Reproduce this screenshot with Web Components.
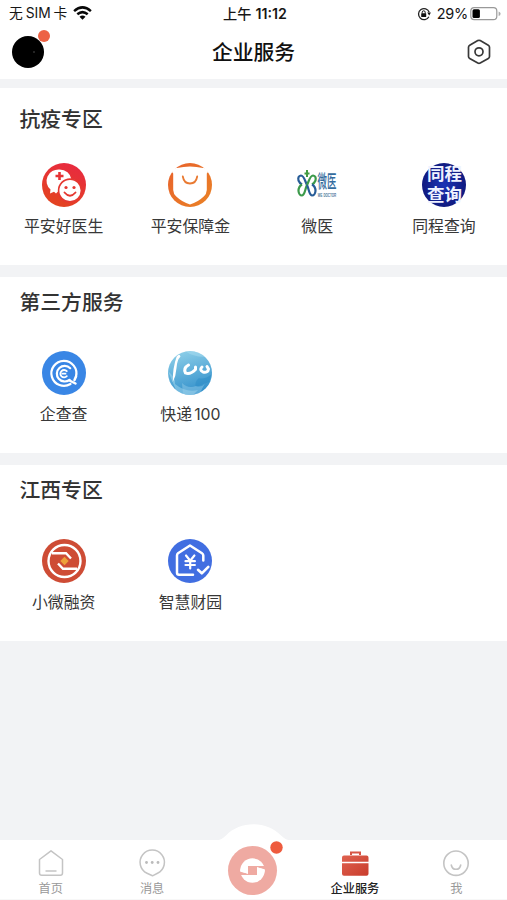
<!DOCTYPE html>
<html lang="zh-CN">
<head>
<meta charset="utf-8">
<title>企业服务</title>
<style>
html,body{margin:0;padding:0}
body{font-family:"Liberation Sans","Noto Sans CJK SC",sans-serif;color:#333;background:#f2f3f5}
</style>
</head>
<body>
<enterprise-page></enterprise-page>
<script>
const define = (name, html) => customElements.define(name, class extends HTMLElement {
  constructor() {
    super();
    this.attachShadow({ mode: 'open' }).innerHTML = html;
  }
});

define('status-bar', `
<style>
:host{display:grid;grid-template-columns:1fr auto 1fr;align-items:center;height:27px;box-sizing:border-box;padding:0 6px 0 9px;color:#161616;font-family:Inter,"Noto Sans CJK SC",sans-serif;font-size:14px;line-height:27px;white-space:nowrap}
div{display:flex;align-items:center}
svg{display:block;flex:none}
.l{gap:5.5px;font-size:13.8px;word-spacing:-1px}
.l svg{margin-top:-1px}
.t{font-weight:600;font-size:14.2px;gap:4px}
.t span:first-child{font-weight:500}
.r{justify-content:flex-end}
.r span{margin:0 2px 0 6px;font-size:14.5px;letter-spacing:-.25px}
</style>
<div class="l"><span>无 SIM 卡</span>
<svg width="19" height="14" viewBox="0 0 19 14" fill="none" stroke="#080808" stroke-width="2.5"><path d="M1.1 5.1Q9.5-2.3 17.9 5.1M4.3 8.3Q9.5 3.9 14.7 8.3"/><path d="M9.5 13.7 6.5 10.7Q9.5 8.2 12.5 10.7Z" fill="#080808" stroke="none"/></svg></div>
<div class="t"><span>上午</span><span>11:12</span></div>
<div class="r">
<svg width="14" height="14" viewBox="0 0 14 14"><path d="M11.9 9.7A5.5 5.5 0 1 1 12.2 5.2" fill="none" stroke="#222" stroke-width="1.3"/><path d="M10.2 5.6h3.7L12.2 8.4z" fill="#111"/><rect x="4.2" y="6.2" width="5" height="3.9" rx=".6" fill="#111"/><path d="M5.2 6.5V5.3a1.5 1.5 0 0 1 3 0v1.2" fill="none" stroke="#111"/></svg>
<span>29%</span>
<svg width="31" height="14" viewBox="0 0 31 14"><rect x=".8" y=".6" width="26" height="12" rx="3.4" fill="#fff" stroke="#999" stroke-width="1.2"/><rect x="2.5" y="2.3" width="7.4" height="8.6" rx="1.5"/><path d="M28.6 4.4q2 .6 2 2.3t-2 2.3z" fill="#aaa"/></svg>
</div>`);

define('page-header', `
<style>
:host{display:grid;grid-template-columns:1fr auto 1fr;align-items:center;height:52px;box-sizing:border-box;padding:0 15px 2px 12px}
h1{margin:0;padding:2px 0 0 3px;font-size:20.8px;font-weight:500;line-height:30px;color:#111}
.avatar{position:relative;width:32px;height:32px;border-radius:50%;background:radial-gradient(circle at 22px 16px,#444 0,#000 1.5px)}
.avatar i{position:absolute;left:25.5px;top:-6.5px;width:12.5px;height:12.5px;border-radius:50%;background:#ed6245}
svg{justify-self:end;display:block}
</style>
<div class="avatar"><i></i></div>
<h1><slot></slot></h1>
<svg width="26" height="26" viewBox="0 0 26 26" fill="none" stroke="#393939" stroke-width="1.7" stroke-linejoin="round"><path d="M11.8 1.6Q13 1 14.2 1.6L22.3 6.2Q23.5 6.9 23.5 8.2V17.4Q23.5 18.7 22.3 19.4L14.2 24Q13 24.7 11.8 24L3.7 19.4Q2.5 18.7 2.5 17.4V8.2Q2.5 6.9 3.7 6.2Z"/><circle cx="13" cy="12.8" r="4"/></svg>`);

define('service-section', `
<style>
:host{display:block;box-sizing:border-box;height:176px;background:#fff;padding-top:11px}
h2{margin:0;padding-left:19.5px;font-size:20.8px;font-weight:500;line-height:30px;color:#333}
.grid{display:grid;grid-template-columns:repeat(4,1fr);margin-top:33.3px}
:host([first]){height:177px;padding-top:17px}
:host([first]) .grid{margin-top:28px}
</style>
<h2><slot name="title"></slot></h2>
<div class="grid"><slot></slot></div>`);

define('service-item', `
<style>
:host{display:flex;flex-direction:column;align-items:center;font-size:15.9px;line-height:24px;color:#383838;white-space:nowrap;padding-left:.6px}
::slotted(svg){display:block;width:44px;height:44px;margin-bottom:7.5px;overflow:visible}
</style>
<slot name="icon"></slot><span><slot></slot></span>`);

define('tab-item', `
<style>
:host{display:flex;flex-direction:column;align-items:center;font-size:12.2px;line-height:18px;color:#999;padding-top:8px}
:host([active]){color:#222;font-weight:500}
::slotted(svg){display:block;width:30px;height:30px;margin-bottom:1.5px}
</style>
<slot name="icon"></slot><span><slot></slot></span>`);

define('center-tab', `
<style>
:host{display:block;position:relative}
svg{position:absolute;left:50%;top:-16px;margin-left:-38px;display:block}
</style>
<svg width="76" height="76" viewBox="0 0 76 76"><path d="M3 16Q6 16 11 11.5C25-3.5 52-3.5 66 11.5Q71 16 74 16V60H3Z" fill="#fff"/>
<circle cx="37.5" cy="46.5" r="24.5" fill="#efaaa2"/>
<circle cx="37.5" cy="46.5" r="12.2" fill="#fff"/>
<path fill="#efaaa2" d="M33 42h9v9h-9zM24.500 47.500 33 49.800V51H24.500ZM50.500 45.500 42 43.200V42H50.500Z"/>
<path fill="#fff" d="M25.500 44.500 33 46.500V49.800L25.200 47.200ZM49.500 48.500 42 46.500V43.200L49.800 45.800Z"/>
<circle cx="61.500" cy="23.500" r="6.200" fill="#ee5b3e"/></svg>`);

define('tab-bar', `
<style>
:host{display:grid;grid-template-columns:repeat(5,1fr);height:60px;background:#fff;box-sizing:border-box;border-bottom:1px solid #f7f7f7}
</style><slot></slot>`);

define('enterprise-page', `
<style>
:host{display:flex;flex-direction:column;height:900px;background:#f2f3f5;overflow:hidden}
.top{background:#fff;height:79px;margin-bottom:9px}
main{display:flex;flex-direction:column;gap:12px;flex:1}
</style>
<div class="top"><status-bar></status-bar><page-header>企业服务</page-header></div>
<main>
<service-section first><span slot="title">抗疫专区</span>
 <service-item><svg slot="icon" viewBox="0 0 44 44"><defs><linearGradient id="a" x1=".7" y1="0" x2=".3" y2="1"><stop stop-color="#e82a40"/><stop offset="1" stop-color="#e3441f"/></linearGradient></defs><circle cx="22" cy="22" r="22" fill="url(#a)"/><path d="M17.500 6.500A12 11.500 0 0 0 8.500 26.500L8 30.500 12 28.800 14 30.500 16 28.500A12 11.500 0 0 0 29.500 16.500 12 11.500 0 0 0 17.500 6.500Z" fill="#fff"/><path d="M17.500 9v8M13.500 13h8" stroke="#e63335" stroke-width="2.600"/><circle cx="28" cy="27.500" r="11.400" fill="#fff" stroke="#e53831" stroke-width="1.600"/><circle cx="24" cy="24.500" r="1.600" fill="#e53831"/><circle cx="32" cy="24.500" r="1.600" fill="#e53831"/><path d="M22.500 29.500Q28 36 33.500 29.500" stroke="#e53831" stroke-width="1.900" fill="none" stroke-linecap="round"/></svg>平安好医生</service-item>
 <service-item><svg slot="icon" viewBox="0 0 44 44"><defs><linearGradient id="b" x1="0" y1="0" x2="1" y2="1"><stop stop-color="#e8612c"/><stop offset="1" stop-color="#ea8225"/></linearGradient></defs><circle cx="22" cy="22" r="22" fill="url(#b)"/><path d="M4 9Q6 4.500 9 5Q22 2 35 5Q38 4.500 40 9L38.800 10.500V27Q38.500 31 36 33.200Q30 39 22 41.500Q14 39 8 33.200Q5.500 31 5.200 27V10.500Z" fill="#fff"/><path d="M14.800 13.500Q16 20.500 22 20.500T29.200 13.500" fill="none" stroke="#e97a32" stroke-width="1.800" stroke-linecap="round"/></svg>平安保障金</service-item>
 <service-item><svg slot="icon" viewBox="0 0 44 44"><g fill="none" stroke-width="2.200"><path d="M12 22C10 18 9 12.500 6 12.500Q2.500 13 3.500 17.500Q4.500 20 7 21.500" stroke="#285d98"/><path d="M12 22C14 18 15 12.500 18 12.500Q21.500 13 20.500 17.500Q19.500 20 17 21.500" stroke="#3c9a4b"/><path d="M7 21.500Q3.500 23.500 3.500 28Q4 32.500 7 32.500C10 32 10 26 12 22" stroke="#3c9a4b"/><path d="M17 21.500Q20.500 23.500 20.500 28Q20 32.500 17 32.500C14 32 14 26 12 22" stroke="#285d98"/></g><path d="M12 7v7M9.500 10.500h5" stroke="#439c44" stroke-width="2"/><text transform="translate(22.500 25.300) scale(.54 1.05)" font-family="Liberation Sans,Noto Sans CJK SC" font-weight="500" font-size="17.500" fill="#346c9e">微医</text><text transform="translate(22.800 33.800) scale(.56 1)" font-family="Liberation Sans" font-weight="700" font-size="5.300" fill="#4f789b">WE DOCTOR</text></svg>微医</service-item>
 <service-item><svg slot="icon" viewBox="0 0 44 44"><defs><radialGradient id="d"><stop stop-color="#1b34b5"/><stop offset="1" stop-color="#101a80"/></radialGradient></defs><circle cx="22" cy="22" r="22" fill="url(#d)"/><g font-family="Liberation Sans,Noto Sans CJK SC" font-weight="700" font-size="17.500" fill="#eef2ff"><text x="5" y="16.800">同程</text><text x="5" y="38">查询</text></g></svg>同程查询</service-item>
</service-section>
<service-section><span slot="title">第三方服务</span>
 <service-item><svg slot="icon" viewBox="0 0 44 44"><circle cx="22" cy="22" r="22" fill="#3986e5"/><g fill="none" stroke="#fff" stroke-width="2.200" stroke-linecap="round"><path d="M28.500 33A12.500 12.500 0 1 1 34 25.500" /><path d="M28.200 17.200A7.800 7.800 0 1 0 27.500 28.800"/><path d="M24.800 20.200A3.700 3.700 0 1 0 24.800 25.200M20.500 22.700h3" stroke-width="1.800"/><path d="M27.500 29.500 33.500 32.500M34 25.500 32.500 29" stroke-width="2.500"/></g></svg>企查查</service-item>
 <service-item><svg slot="icon" viewBox="0 0 44 44"><defs><clipPath id="e"><circle cx="22" cy="22" r="22"/></clipPath><linearGradient id="f" x1=".2" y1="0" x2=".5" y2="1"><stop stop-color="#8fd0e9"/><stop offset="1" stop-color="#3290cb"/></linearGradient></defs><g clip-path="url(#e)"><path d="M0 0h44v44H0z" fill="url(#f)"/><path d="M17 0Q28 8 44 5V0ZM0 20Q8 27 7 33Q18 42 30 39L25 44H10Z" fill="#b0dff1" opacity=".45"/><path d="M31 27Q26 31 28 36L41 31 44 23Q36 29 31 27" fill="#2586c4" opacity=".4"/><path d="M14 32Q20 38 28 35Q34 37 37 32L31 44H15Z" fill="#a2d5ed" opacity=".4"/></g><path d="M8.700 5.500Q4.500 17 4.800 31Q8 25 8.500 17T12.500 5.500Q11.500 2 8.700 5.500Z" fill="#fff"/><g fill="none" stroke="#fff" stroke-linecap="round" stroke-linejoin="round" stroke-width="3"><path d="M20.500 14Q15 17 17.500 22Q22 24 27.500 18.500V16"/><path d="M34 16Q31 19 35 21Q40 22 40.500 18L39 15.500"/></g></svg>快递<span style="font-family:Inter,sans-serif;font-size:15.800px;margin-left:2px">100</span></service-item>
</service-section>
<service-section><span slot="title">江西专区</span>
 <service-item><svg slot="icon" viewBox="0 0 44 44"><circle cx="22" cy="22" r="22" fill="#ce4c35"/><g fill="none" stroke="#fff" stroke-width="2.400"><circle cx="22.500" cy="22" r="16"/><path d="M10 14.200H24L29 19.500M35 29.800H21L16 24.500"/></g><path d="m22.500 17.800 4.200 4.200-4.200 4.200-4.200-4.200z" fill="#eda13a"/></svg>小微融资</service-item>
 <service-item><svg slot="icon" viewBox="0 0 44 44"><circle cx="22" cy="22" r="22" fill="#416ee1"/><g fill="none" stroke="#fff" stroke-width="2.500" stroke-linecap="round" stroke-linejoin="round"><path d="M25 35.800H11Q9 35.800 9 33.800V16.500Q9 15 10 14.200L22 6.500 34 14.200Q35.300 15 35.300 16.500V21.500"/><path d="m30 30.800 3.800 3.500 6.500-6.500" stroke-width="2.600"/><path d="m18 16.500 4.200 5.200 4.200-5.200M22.200 21.700V29.500M17.500 22.200h9.400M17.500 26h9.400" stroke-width="2.200"/></g></svg>智慧财园</service-item>
</service-section>
</main>
<tab-bar>
 <tab-item><svg slot="icon" viewBox="0 0 30 30" fill="none" stroke="#c4c4c4" stroke-width="1.500" stroke-linejoin="round"><path d="M15 2.800 26.500 11.500V25Q26.500 27.300 24.300 27.300H5.700Q3.500 27.300 3.500 25V11.500Z"/><path d="M9.500 23h11"/></svg>首页</tab-item>
 <tab-item><svg slot="icon" viewBox="0 0 30 30" fill="none" stroke="#c4c4c4" stroke-width="1.500" stroke-linejoin="round"><path d="M10 25.300A12.200 12.200 0 1 1 20.500 25.300L15.500 27.800Z"/><g fill="#bbb" stroke="none"><circle cx="9.500" cy="14.500" r="1.400"/><circle cx="15.200" cy="14.500" r="1.400"/><circle cx="21" cy="14.500" r="1.400"/></g></svg>消息</tab-item>
 <center-tab></center-tab>
 <tab-item active><svg slot="icon" viewBox="0 0 30 30"><defs><linearGradient id="g" x2="1" y2="1"><stop stop-color="#df6250"/><stop offset="1" stop-color="#c93c2c"/></linearGradient></defs><path d="M11 7V4.500H20V7" fill="none" stroke="#d75645" stroke-width="2"/><path d="M4 7.500H26.500Q28.500 7.500 28.500 9.500V13.800H2V9.500Q2 7.500 4 7.500ZM2 15.300H28.500V25.800Q28.500 27.800 26.500 27.800H4Q2 27.800 2 25.800Z" fill="url(#g)"/></svg>企业服务</tab-item>
 <tab-item><svg slot="icon" viewBox="0 0 30 30" fill="none" stroke="#c4c4c4" stroke-width="1.600" stroke-linecap="round"><circle cx="15" cy="15.200" r="12.200"/><path d="M10.300 17Q11 21.300 15 21.300T19.700 17"/></svg>我</tab-item>
</tab-bar>`);
</script>
</body>
</html>
